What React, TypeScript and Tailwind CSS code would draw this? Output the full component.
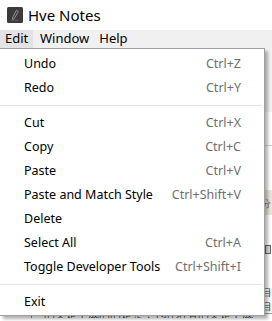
import React from "react";

type Item = { label: string; shortcut?: string } | "sep";

const items: Item[] = [
  { label: "Undo", shortcut: "Ctrl+Z" },
  { label: "Redo", shortcut: "Ctrl+Y" },
  "sep",
  { label: "Cut", shortcut: "Ctrl+X" },
  { label: "Copy", shortcut: "Ctrl+C" },
  { label: "Paste", shortcut: "Ctrl+V" },
  { label: "Paste and Match Style", shortcut: "Ctrl+Shift+V" },
  { label: "Delete" },
  { label: "Select All", shortcut: "Ctrl+A" },
  { label: "Toggle Developer Tools", shortcut: "Ctrl+Shift+I" },
  "sep",
  { label: "Exit" },
];

const AppIcon = () => (
  <svg width="16" height="16" viewBox="0 0 16 16">
    <rect x="0" y="0" width="16" height="16" rx="1.5" fill="#3b3b3b" />
    <path
      d="M9.5 3.2 L11.3 4.6 L7.2 11.6 L5.6 12.4 L5.6 10.6 Z"
      fill="none"
      stroke="#9a9a9a"
      strokeWidth="0.9"
    />
    <path d="M4 13.2 H12" stroke="#6a6a6a" strokeWidth="0.8" />
  </svg>
);

const EditMenu = () => (
  <div className="absolute left-0 top-[48px] w-[265px] border border-l-0 border-[#a0a0a0] bg-white pt-[3px] pb-[1px] shadow-[3px_3px_3px_rgba(0,0,0,0.3)]">
    {items.map((it, i) =>
      it === "sep" ? (
        <div key={i} className="flex h-[11px] items-center">
          <div className="h-px w-[262px] bg-[#e3e3e3]" />
        </div>
      ) : (
        <div
          key={i}
          className="flex h-[24px] items-center justify-between pl-[24px] pr-[23px] text-[12.5px] text-black"
        >
          <span>{it.label}</span>
          {it.shortcut && <span className="text-[#6f6f6f]">{it.shortcut}</span>}
        </div>
      )
    )}
  </div>
);

export default function App() {
  return (
    <div className="relative flex h-[321px] w-[272px] flex-col overflow-hidden bg-white font-['Noto_Sans','Liberation_Sans',sans-serif]">
      {/* title bar */}
      <div className="flex h-[30px] items-center gap-[5px] pl-[7px]">
        <AppIcon />
        <span className="text-[15px] text-black">Hve Notes</span>
      </div>

      {/* menu bar */}
      <div className="flex h-[18px] items-center bg-[#f0f0f0] text-[13px] text-black">
        <span className="flex h-full w-[33px] items-center bg-[#e3e3e3] pl-[5px]">Edit</span>
        <span className="pl-[7px] pr-[6px]">Window</span>
        <span className="px-[4px]">Help</span>
      </div>

      {/* window content behind the menu */}
      <div className="flex flex-1 flex-col text-[10px] leading-none text-[#555]">
        <div className="h-[64px] bg-[#f2f2f2]" />
        <div className="h-[33px]" />
        <div className="h-px bg-[#d0d0d0]" />
        <div className="h-[44px]" />
        <div className="flex h-[25px] items-center justify-end bg-[#ebe4d8] pr-[1px] text-[#6b5a45]">分</div>
        <div className="h-[30px]" />
        <div className="flex h-[10px] justify-end pr-[1px]">
          <div className="h-[9px] w-[6px] border border-[#666] bg-[#ddd]" />
        </div>
        <div className="h-[30px]" />
        <div className="flex h-[14px] items-center justify-end text-[#333]">目</div>
        <div className="flex h-[14px] items-center justify-end text-[#333]">目</div>
        <div className="flex h-[5px] items-start overflow-hidden border-t border-[#9a9a9a] text-[#444]">
          <div className="h-full w-[32px] border-r border-[#888]" />
          <span className="-mt-[6px] whitespace-nowrap pl-[12px] text-[11px]">的文是下成的的是整，包許对有的文是下成</span>
        </div>
      </div>

      <EditMenu />
    </div>
  );
}
